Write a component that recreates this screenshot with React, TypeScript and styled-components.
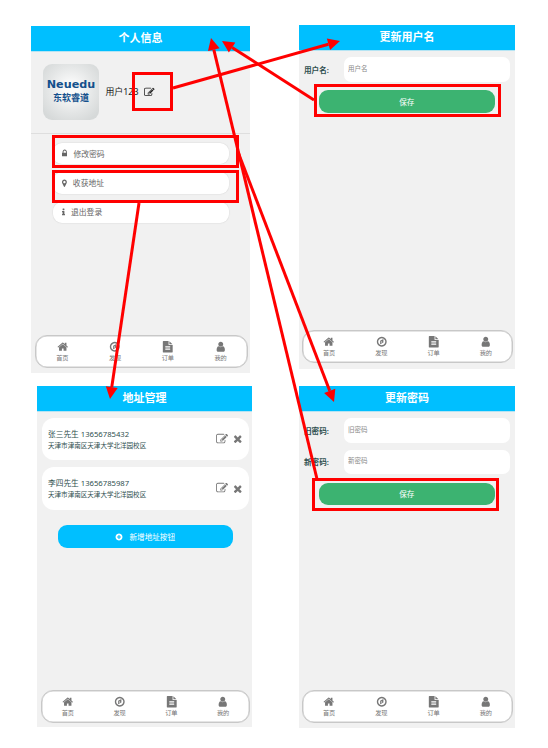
import React from 'react';
import styled, { createGlobalStyle } from 'styled-components';

const GlobalStyle = createGlobalStyle`
  * { box-sizing: border-box; }
  body {
    margin: 0;
    background: #fff;
    font-family: "Noto Sans", "Noto Sans CJK SC", sans-serif;
    color: #2f4f4f;
  }
`;

const Board = styled.main`
  position: relative;
  display: flex;
  align-items: flex-start;
  width: 548px;
  height: 748px;
  overflow: hidden;
`;

const Column = styled.div<{ $top: number; $gap: number; $left: number; $width: number }>`
  display: flex;
  flex-direction: column;
  gap: ${p => p.$gap}px;
  width: ${p => p.$width}px;
  margin-left: ${p => p.$left}px;
  padding-top: ${p => p.$top}px;
`;

const Screen = styled.section<{ $width: number; $height: number; $indent?: number }>`
  display: flex;
  flex-direction: column;
  width: ${p => p.$width}px;
  height: ${p => p.$height}px;
  margin-left: ${p => p.$indent ?? 0}px;
  background: #f1f1f1;
`;

const Header = styled.header`
  display: flex;
  flex: none;
  align-items: center;
  justify-content: center;
  height: 25px;
  padding-bottom: 1px;
  background: #00bfff;
  box-shadow: 0 1px 0 #b5e4f3;
  color: #fff;
  font-size: 11px;
  font-weight: 700;
  line-height: 14px;
`;

const Profile = styled.div`
  display: flex;
  flex: none;
  align-items: center;
  height: 83px;
  padding: 0 12px;
  border-bottom: 1px solid #dedede;
  color: #222;
`;

const Avatar = styled.div`
  display: flex;
  flex-direction: column;
  align-items: center;
  justify-content: center;
  width: 56px;
  height: 56px;
  padding-bottom: 3px;
  border-radius: 9px;
  background: radial-gradient(circle at 50% 45%, #fafafa 15%, #e4e6e6 55%, #d6d9d9 85%);
  color: #14508c;
  font-weight: 700;
  white-space: nowrap;
`;

const Brand = styled.span`
  font: 700 11.2px/13px "DejaVu Sans", sans-serif;
`;

const BrandSub = styled.span`
  font: 700 9px/13px "Noto Sans CJK SC", sans-serif;
`;

const UserName = styled.span`
  margin: 0 6px 0 6.5px;
  font-size: 8.9px;
  line-height: 14px;
`;

const Menu = styled.div`
  display: flex;
  flex-direction: column;
  gap: 8px;
  padding: 9px 21px 0 22px;
`;

const MenuItem = styled.div`
  display: flex;
  align-items: center;
  gap: 6px;
  height: 21.3px;
  padding-left: 9px;
  border-radius: 9px;
  background: #fff;
  box-shadow: 0 0 1px 0.5px #dfdfdf;
  color: #666;
  font-size: 7.8px;
  line-height: 12px;
`;

const Nav = styled.nav<{ $bottom: number; $left?: number }>`
  display: flex;
  flex: none;
  align-items: center;
  height: 33px;
  margin: auto 2px ${p => p.$bottom}px ${p => p.$left ?? 4}px;
  border: 1px solid #c8c8c8;
  border-radius: 12px;
  background: #fff;
  box-shadow: inset 0 0 0 0.5px #ccc;
`;

const NavItem = styled.div`
  display: flex;
  flex: 1;
  flex-direction: column;
  align-items: center;
  gap: 1px;
  color: #777;
  font-size: 6.2px;
  line-height: 8px;
`;

const Form = styled.div`
  display: flex;
  flex-direction: column;
  gap: 7px;
  padding: 7px 5px 0;
`;

const Field = styled.label`
  display: flex;
  align-items: center;
  height: 24.5px;
  font-size: 7.6px;
  font-weight: 700;
`;

const FieldName = styled.span`
  width: 39.5px;
  white-space: nowrap;
`;

const Input = styled.input`
  flex: 1;
  min-width: 0;
  height: 100%;
  padding: 0 4.5px 2px;
  border: 0;
  border-radius: 7px;
  outline: 0;
  background: #fff;
  font: 6.5px "Noto Sans", "Noto Sans CJK SC", sans-serif;
  &::placeholder { color: #888; opacity: 1; }
`;

const Button = styled.button<{ $tone: string; $top: number; $left: number }>`
  display: flex;
  flex: none;
  align-items: center;
  justify-content: center;
  gap: 6px;
  width: 175.5px;
  height: 22.5px;
  margin: ${p => p.$top}px 0 0 ${p => p.$left}px;
  padding: 1px 0 0;
  border: 0;
  border-radius: 9px;
  background: ${p => p.$tone};
  color: #fff;
  font: 7.6px/12px "Noto Sans", "Noto Sans CJK SC", sans-serif;
`;

const AddressList = styled.div`
  display: flex;
  flex-direction: column;
  gap: 7px;
  padding: 7px 3px 0 4.5px;
`;

const Address = styled.article`
  display: flex;
  align-items: center;
  height: 42.3px;
  padding: 0 5.5px 0 6.5px;
  border-radius: 12px;
  background: #fff;
  color: #777;
`;

const Contact = styled.div`
  display: flex;
  flex: 1;
  flex-direction: column;
  padding-top: 1.5px;
  color: #2f4f4f;
  font-size: 7.7px;
  line-height: 11px;
`;

const Place = styled.span`
  font-size: 6.55px;
`;

const Actions = styled.div`
  display: flex;
  align-items: center;
  gap: 3.7px;
`;

const Overlay = styled.svg`
  position: absolute;
  inset: 0;
  pointer-events: none;
`;

const Glyph = styled.svg`
  display: block;
  flex: none;
  fill: currentColor;
`;

const paths = {
  home: 'M1472 992v480q0 26-19 45t-45 19h-384v-384h-256v384h-384q-26 0-45-19t-19-45v-480q0-1 .5-3t.5-3l575-474 575 474q1 2 1 6zm223-69l-62 74q-8 9-21 11h-3q-13 0-21-7l-692-577-692 577q-12 8-24 7-13-2-21-11l-62-74q-8-10-7-23.5t11-21.5l719-599q32-26 76-26t76 26l244 204v-195q0-14 9-23t23-9h192q14 0 23 9t9 23v408l219 182q10 8 11 21.5t-7 23.5z',
  compass: 'M896 128a768 768 0 1 0 .1 0zM896 352a544 544 0 1 1-.1 0zM1152 482v542l-512 256v-542zM768 1056l256-128-256-128z',
  file: 'M1596 476q14 14 28 36h-472v-472q22 14 36 28zm-476 164h544v1056q0 40-28 68t-68 28h-1344q-40 0-68-28t-28-68v-1600q0-40 28-68t68-28h800v544q0 40 28 68t68 28zm160 736v-64q0-14-9-23t-23-9h-704q-14 0-23 9t-9 23v64q0 14 9 23t23 9h704q14 0 23-9t9-23zm0-256v-64q0-14-9-23t-23-9h-704q-14 0-23 9t-9 23v64q0 14 9 23t23 9h704q14 0 23-9t9-23zm0-256v-64q0-14-9-23t-23-9h-704q-14 0-23 9t-9 23v64q0 14 9 23t23 9h704q14 0 23-9t9-23z',
  user: 'M1536 1399q0 109-62.5 187t-150.5 78h-854q-88 0-150.5-78t-62.5-187q0-85 8.5-160.5t31.5-152 58.5-131 94-89 134.5-34.5q131 128 313 128t313-128q76 0 134.5 34.5t94 89 58.5 131 31.5 152 8.5 160.5zm-256-887q0 159-112.5 271.5t-271.5 112.5-271.5-112.5-112.5-271.5 112.5-271.5 271.5-112.5 271.5 112.5 112.5 271.5z',
  lock: 'M640 768h512v-192q0-106-75-181t-181-75-181 75-75 181v192zm832 96v576q0 40-28 68t-68 28h-960q-40 0-68-28t-28-68v-576q0-40 28-68t68-28h32v-192q0-184 132-316t316-132 316 132 132 316v192h32q40 0 68 28t28 68z',
  pin: 'M1152 640q0-106-75-181t-181-75-181 75-75 181 75 181 181 75 181-75 75-181zm256 0q0 109-33 179l-364 774q-16 33-47.5 52t-67.5 19-67.5-19-46.5-52l-365-774q-33-70-33-179 0-212 150-362t362-150 362 150 150 362z',
  info: 'M1216 1344v128q0 26-19 45t-45 19h-512q-26 0-45-19t-19-45v-128q0-26 19-45t45-19h64v-384h-64q-26 0-45-19t-19-45v-128q0-26 19-45t45-19h384q26 0 45 19t19 45v576h64q26 0 45 19t19 45zm-128-1152v192q0 26-19 45t-45 19h-256q-26 0-45-19t-19-45v-192q0-26 19-45t45-19h256q26 0 45 19t19 45z',
  times: 'M1490 1322q0 40-28 68l-136 136q-28 28-68 28t-68-28l-294-294-294 294q-28 28-68 28t-68-28l-136-136q-28-28-28-68t28-68l294-294-294-294q-28-28-28-68t28-68l136-136q28-28 68-28t68 28l294 294 294-294q28-28 68-28t68 28l136 136q28 28 28 68t-28 68l-294 294 294 294q28 28 28 68z',
  plus: 'M1344 960v-128q0-26-19-45t-45-19h-256v-256q0-26-19-45t-45-19h-128q-26 0-45 19t-19 45v256h-256q-26 0-45 19t-19 45v128q0 26 19 45t45 19h256v256q0 26 19 45t45 19h128q26 0 45-19t19-45v-256h256q26 0 45-19t19-45zm320-64q0 209-103 385.5t-279.5 279.5-385.5 103-385.5-103-279.5-279.5-103-385.5 103-385.5 279.5-279.5 385.5-103 385.5 103 279.5 279.5 103 385.5z',
  edit: 'M888 1184l116-116-152-152-116 116v56h96v96h56zm440-720q-16-16-33 1l-350 350q-17 17-1 33t33-1l350-350q17-17 1-33zm80 594v190q0 119-84.5 203.5t-203.5 84.5h-832q-119 0-203.5-84.5t-84.5-203.5v-832q0-119 84.5-203.5t203.5-84.5h832q63 0 117 25 15 7 18 23 3 17-9 29l-49 49q-14 14-32 8-23-6-45-6h-832q-66 0-113 47t-47 113v832q0 66 47 113t113 47h832q66 0 113-47t47-113v-126q0-13 9-22l64-64q15-15 35-7t20 29zm-96-738l288 288-672 672h-288v-288zm444 132l-92 92-288-288 92-92q28-28 68-28t68 28l152 152q28 28 28 68t-28 68z',
};

type IconName = keyof typeof paths;

// Narrow glyphs take only their own advance width; the rest fill the square.
const advance: Partial<Record<IconName, number>> = { lock: 1152, pin: 1024, info: 640 };

function Icon({ name, size }: { name: IconName; size: number }) {
  const width = advance[name] ?? 1792;
  return (
    <Glyph
      width={(size * width) / 1792}
      height={size}
      viewBox={`${(1792 - width) / 2} 0 ${width} 1792`}
    >
      <path fillRule={name === 'compass' ? 'evenodd' : 'nonzero'} d={paths[name]} />
    </Glyph>
  );
}

const tabs: { icon: IconName; label: string }[] = [
  { icon: 'home', label: '首页' },
  { icon: 'compass', label: '发现' },
  { icon: 'file', label: '订单' },
  { icon: 'user', label: '我的' },
];

function TabBar({ bottom, left }: { bottom: number; left?: number }) {
  return (
    <Nav $bottom={bottom} $left={left}>
      {tabs.map(t => (
        <NavItem key={t.label}>
          <Icon name={t.icon} size={11.5} />
          {t.label}
        </NavItem>
      ))}
    </Nav>
  );
}

function TextField({ label, hint }: { label: string; hint: string }) {
  return (
    <Field>
      <FieldName>{label}</FieldName>
      <Input placeholder={hint} />
    </Field>
  );
}

const menu: { icon: IconName; label: string }[] = [
  { icon: 'lock', label: '修改密码' },
  { icon: 'pin', label: '收获地址' },
  { icon: 'info', label: '退出登录' },
];

const addresses = [
  { contact: '张三先生 13656785432', place: '天津市津南区天津大学北洋园校区' },
  { contact: '李四先生 13656785987', place: '天津市津南区天津大学北洋园校区' },
];

const frames = [
  [133.5, 73.5, 38, 36],
  [53.5, 136.5, 184, 30],
  [53.5, 171.5, 184, 30],
  [315.5, 85.5, 184, 30],
  [313.5, 479.5, 184, 30],
];

const arrows = [
  [173, 88, 340, 41],
  [314, 100, 222, 41],
  [139, 203, 110, 399],
  [238, 152, 334, 402],
  [317, 479, 211, 38],
];

function Arrow({ points }: { points: number[] }) {
  const [x1, y1, x2, y2] = points;
  const length = Math.hypot(x2 - x1, y2 - y1);
  const ux = (x2 - x1) / length;
  const uy = (y2 - y1) / length;
  const bx = x2 - ux * 12;
  const by = y2 - uy * 12;
  return (
    <>
      <line x1={x1} y1={y1} x2={bx} y2={by} stroke="#f00" strokeWidth="3" />
      <polygon
        fill="#f00"
        points={`${x2},${y2} ${bx - uy * 6},${by + ux * 6} ${bx + uy * 6},${by - ux * 6}`}
      />
    </>
  );
}

export default function App() {
  return (
    <>
      <GlobalStyle />
      <Board>
        <Column $left={31} $top={26} $gap={13} $width={221}>
          <Screen $width={219} $height={347}>
            <Header>个人信息</Header>
            <Profile>
              <Avatar>
                <Brand>Neuedu</Brand>
                <BrandSub>东软睿道</BrandSub>
              </Avatar>
              <UserName>用户123</UserName>
              <Icon name="edit" size={10.5} />
            </Profile>
            <Menu>
              {menu.map(m => (
                <MenuItem key={m.label}>
                  <Icon name={m.icon} size={8.5} />
                  {m.label}
                </MenuItem>
              ))}
            </Menu>
            <TabBar bottom={5} />
          </Screen>
          <Screen $width={215} $height={341} $indent={6}>
            <Header>地址管理</Header>
            <AddressList>
              {addresses.map(a => (
                <Address key={a.contact}>
                  <Contact>
                    {a.contact}
                    <Place>{a.place}</Place>
                  </Contact>
                  <Actions>
                    <Icon name="edit" size={12} />
                    <Icon name="times" size={11.5} />
                  </Actions>
                </Address>
              ))}
            </AddressList>
            <Button $tone="#00bfff" $top={15.5} $left={20.5}>
              <Icon name="plus" size={8} />
              新增地址按钮
            </Button>
            <TabBar bottom={4} />
          </Screen>
        </Column>
        <Column $left={47} $top={25} $gap={17} $width={216}>
          <Screen $width={216} $height={344}>
            <Header>更新用户名</Header>
            <Form>
              <TextField label="用户名:" hint="用户名" />
            </Form>
            <Button $tone="#3cb371" $top={8.5} $left={20}>保存</Button>
            <TabBar bottom={6} left={3} />
          </Screen>
          <Screen $width={216} $height={342}>
            <Header>更新密码</Header>
            <Form>
              <TextField label="旧密码:" hint="旧密码" />
              <TextField label="新密码:" hint="新密码" />
            </Form>
            <Button $tone="#3cb371" $top={8.5} $left={20}>保存</Button>
            <TabBar bottom={5} left={3} />
          </Screen>
        </Column>
        <Overlay width="548" height="748" viewBox="0 0 548 748">
          {frames.map(([x, y, width, height]) => (
            <rect key={`${x}-${y}`} x={x} y={y} width={width} height={height} fill="none" stroke="#f00" strokeWidth="3" />
          ))}
          {arrows.map(points => <Arrow key={points.join()} points={points} />)}
        </Overlay>
      </Board>
    </>
  );
}
